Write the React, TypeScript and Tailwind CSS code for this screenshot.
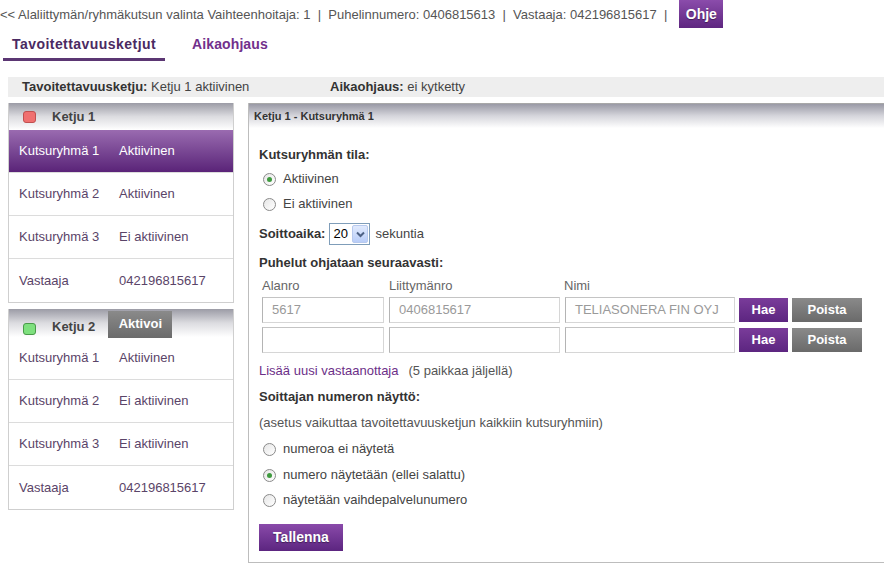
import React from "react";

const font = { fontFamily: '"Liberation Sans", Arial, sans-serif' };

function Radio({ checked }: { checked?: boolean }) {
  return (
    <span className="relative inline-flex h-[13px] w-[13px] shrink-0 items-center justify-center rounded-full border border-[#8a8a8a] bg-gradient-to-br from-[#e6e6e6] to-white">
      {checked && <span className="h-[5px] w-[5px] rounded-full bg-[#3f9a3f]" />}
    </span>
  );
}

function RadioRow({ label, checked, mt }: { label: string; checked?: boolean; mt: string }) {
  return (
    <div className={`flex h-[20px] items-center pl-[4px] ${mt}`}>
      <Radio checked={checked} />
      <span className="ml-[7px] text-[13px] text-[#444]">{label}</span>
    </div>
  );
}

function ChainRow({ a, b, selected, last }: { a: string; b: string; selected?: boolean; last?: boolean }) {
  return (
    <div
      className={`flex h-[43px] items-center text-[13px] ${
        selected
          ? "bg-gradient-to-b from-[#9a6bb0] to-[#5a2378] text-white"
          : "text-[#5a4468]"
      } ${last ? "" : "border-b border-[#dcdcdc]"}`}
    >
      <span className="w-[110px] shrink-0 pl-[10px]">{a}</span>
      <span>{b}</span>
    </div>
  );
}

function Input({ w, value }: { w: string; value?: string }) {
  return (
    <div
      className={`${w} flex h-[26px] shrink-0 items-center border border-[#d6d6d6] border-l-[#b4b4b4] border-t-[#c4c4c4] bg-white pl-[9px] text-[13px] text-[#9a9a9a]`}
    >
      {value}
    </div>
  );
}

function Hae() {
  return (
    <div className="ml-[4px] flex h-[24px] w-[49px] items-center justify-center bg-gradient-to-b from-[#7a3c9a] to-[#5c2580] text-[13px] font-bold text-white">
      Hae
    </div>
  );
}
function Poista() {
  return (
    <div className="ml-[4px] flex h-[24px] w-[70px] items-center justify-center bg-gradient-to-b from-[#8a8a8a] to-[#6a6a6a] text-[13px] font-bold text-white">
      Poista
    </div>
  );
}

export default function App() {
  return (
    <div className="h-[565px] w-[884px] overflow-hidden bg-white" style={font}>
      {/* top line */}
      <div className="flex h-[30px] items-center">
        <span className="whitespace-pre text-[13px] text-[#555]">
          {"<< Alaliittymän/ryhmäkutsun valinta Vaihteenhoitaja: 1  |  Puhelinnumero: 0406815613  |  Vastaaja: 042196815617  |"}
        </span>
        <div className="ml-[12px] -mt-[2px] flex h-[28px] w-[44px] items-center justify-center bg-gradient-to-b from-[#8b4cab] to-[#5e2680] text-[14px] font-bold text-white [text-shadow:0_1px_1px_rgba(0,0,0,0.4)]">
          Ohje
        </div>
      </div>
      {/* tabs */}
      <div className="flex h-[32px] items-start pl-[3px]">
        <div className="flex h-[31px] items-center border-b-[3px] border-[#5b3673] px-[9px] pt-[1px] text-[14px] font-bold tracking-[0.45px] text-[#4a2a62]">
          Tavoitettavuusketjut
        </div>
        <div className="ml-[27px] flex h-[28px] items-center pt-[1px] text-[14px] font-bold tracking-[0.1px] text-[#72308c]">
          Aikaohjaus
        </div>
      </div>
      {/* status bar */}
      <div className="ml-[8px] mt-[15px] flex h-[20px] items-center bg-[#eeeeee] text-[13px] text-[#444]">
        <span className="ml-[14px] w-[308px]">
          <b className="text-[#333]">Tavoitettavuusketju:</b> Ketju 1 aktiivinen
        </span>
        <span>
          <b className="text-[#333]">Aikaohjaus:</b> ei kytketty
        </span>
      </div>
      {/* body */}
      <div className="ml-[8px] mt-[6px] flex items-start">
        {/* left column */}
        <div className="w-[226px] shrink-0">
          <div className="border-x border-b border-[#cfcfcf]">
            <div className="flex h-[27px] items-center bg-gradient-to-b from-[#9c9ca6] via-[#dcdce0] to-white">
              <span className="ml-[14px] h-[12px] w-[13px] rounded-[3px] border border-[#c05050] bg-[#f07070]" />
              <span className="ml-[16px] text-[13px] font-bold text-[#444]">Ketju 1</span>
            </div>
            <ChainRow a="Kutsuryhmä 1" b="Aktiivinen" selected />
            <ChainRow a="Kutsuryhmä 2" b="Aktiivinen" />
            <ChainRow a="Kutsuryhmä 3" b="Ei aktiivinen" />
            <ChainRow a="Vastaaja" b="042196815617" last />
          </div>
          <div className="mt-[6px] border-x border-b border-[#cfcfcf]">
            <div className="flex h-[28px] items-end bg-gradient-to-b from-[#9c9ca6] via-[#dcdce0] to-white pb-[1px]">
              <span className="mb-[1px] ml-[14px] h-[12px] w-[13px] rounded-[3px] border border-[#4a9a4a] bg-[#7ee07e]" />
              <span className="ml-[16px] text-[13px] font-bold text-[#444]">Ketju 2</span>
              <div className="mb-[-2px] ml-[13px] mt-[2px] flex h-[27px] w-[64px] items-start justify-center self-start bg-gradient-to-b from-[#8a8a8a] to-[#6b6b6b] pt-[3px] text-[13px] font-bold text-white">
                Aktivoi
              </div>
            </div>
            <ChainRow a="Kutsuryhmä 1" b="Aktiivinen" />
            <ChainRow a="Kutsuryhmä 2" b="Ei aktiivinen" />
            <ChainRow a="Kutsuryhmä 3" b="Ei aktiivinen" />
            <ChainRow a="Vastaaja" b="042196815617" last />
          </div>
        </div>
        {/* main panel */}
        <div className="ml-[14px] w-[660px] shrink-0 border-b border-l border-[#bdbdbd] pb-[11px]">
          <div className="flex h-[25px] items-center border-t border-[#a8a8a8] bg-gradient-to-b from-[#9a9aa6] via-[#d6d6dc] to-white pl-[5px] text-[11px] font-bold text-[#333]">
            Ketju 1 - Kutsuryhmä 1
          </div>
          <div className="pl-[10px]">
            <div className="mt-[17px] flex h-[20px] items-center text-[13px] font-bold text-[#333]">
              Kutsuryhmän tila:
            </div>
            <RadioRow label="Aktiivinen" checked mt="mt-[4px]" />
            <RadioRow label="Ei aktiivinen" mt="mt-[5px]" />
            <div className="mt-[9px] flex h-[22px] items-center text-[13px] text-[#444]">
              <b className="text-[#333]">Soittoaika:</b>
              <div className="ml-[4px] flex h-[22px] w-[41px] items-center border border-[#7f9db9] bg-white">
                <span className="ml-[3px] text-[13px] text-black">20</span>
                <span className="ml-auto mr-[1px] flex h-[18px] w-[16px] items-center justify-center rounded-[2px] border border-[#b7c9ee] bg-gradient-to-b from-[#e1eafd] to-[#b9cdf8]">
                  <svg width="9" height="7" viewBox="0 0 9 7">
                    <path d="M1 1.5 L4.5 5 L8 1.5" fill="none" stroke="#4d6185" strokeWidth="2" />
                  </svg>
                </span>
              </div>
              <span className="ml-[5px]">sekuntia</span>
            </div>
            <div className="mt-[8px] flex h-[20px] items-center text-[13px] font-bold text-[#333]">
              Puhelut ohjataan seuraavasti:
            </div>
            <div className="mt-[4px] flex h-[18px] items-center pl-[3px] text-[13px] text-[#666]">
              <span className="w-[127px]">Alanro</span>
              <span className="w-[175px]">Liittymänro</span>
              <span>Nimi</span>
            </div>
            <div className="mt-[2px] flex items-center gap-[5px] pl-[3px]">
              <Input w="w-[122px]" value="5617" />
              <Input w="w-[171px]" value="0406815617" />
              <Input w="w-[170px]" value="TELIASONERA FIN OYJ" />
              <div className="-ml-[5px] flex">
                <Hae />
                <Poista />
              </div>
            </div>
            <div className="mt-[4px] flex items-center gap-[5px] pl-[3px]">
              <Input w="w-[122px]" />
              <Input w="w-[171px]" />
              <Input w="w-[170px]" />
              <div className="-ml-[5px] flex">
                <Hae />
                <Poista />
              </div>
            </div>
            <div className="mt-[8px] flex h-[20px] items-center text-[13px]">
              <span className="text-[#6c2f88]">Lisää uusi vastaanottaja</span>
              <span className="ml-[10px] text-[#555]">(5 paikkaa jäljellä)</span>
            </div>
            <div className="mt-[6px] flex h-[20px] items-center text-[13px] font-bold text-[#333]">
              Soittajan numeron näyttö:
            </div>
            <div className="mt-[6px] flex h-[20px] items-center text-[13px] text-[#555]">
              (asetus vaikuttaa tavoitettavuusketjun kaikkiin kutsuryhmiin)
            </div>
            <RadioRow label="numeroa ei näytetä" mt="mt-[6px]" />
            <RadioRow label="numero näytetään (ellei salattu)" checked mt="mt-[6px]" />
            <RadioRow label="näytetään vaihdepalvelunumero" mt="mt-[5px]" />
            <div className="mt-[14px] flex h-[27px] w-[84px] items-center justify-center bg-gradient-to-b from-[#8a4aaa] to-[#5c2580] text-[14px] font-bold text-white [text-shadow:0_1px_1px_rgba(0,0,0,0.4)]">
              Tallenna
            </div>
          </div>
        </div>
      </div>
    </div>
  );
}
